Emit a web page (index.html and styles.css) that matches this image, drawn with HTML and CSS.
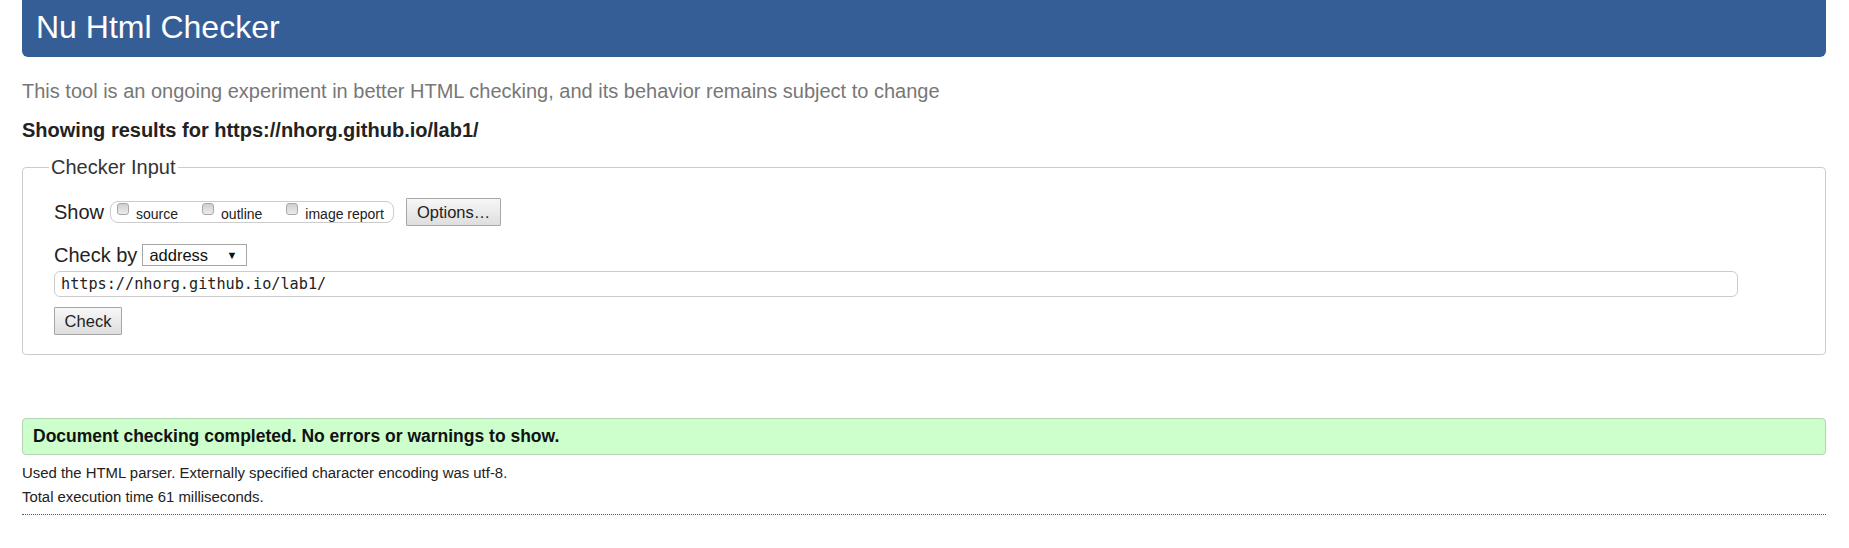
FILE: index.html
```html
<!DOCTYPE html>
<html lang="en">
<head>
<meta charset="utf-8">
<title>Nu Html Checker</title>
<link rel="stylesheet" href="styles.css">
</head>
<body>
<h1 class="title">Nu Html Checker</h1>
<p class="about">This tool is an ongoing experiment in better HTML checking, and its behavior remains subject to change</p>
<p class="results-for">Showing results for https://nhorg.github.io/lab1/</p>
<fieldset class="checker">
  <legend class="legend">Checker Input</legend>
  <div class="row show-row">
    <span class="label">Show</span>
    <span class="opts">
      <span class="opt"><input type="checkbox" class="cb"><span class="opt-text">source</span></span>
      <span class="opt"><input type="checkbox" class="cb"><span class="opt-text">outline</span></span>
      <span class="opt"><input type="checkbox" class="cb"><span class="opt-text">image report</span></span>
    </span>
    <button class="btn options">Options…</button>
  </div>
  <div class="row checkby-row">
    <span class="label">Check by</span>
    <span class="select"><span class="select-text">address</span><span class="arrow">▼</span></span>
  </div>
  <div class="url">https://nhorg.github.io/lab1/</div>
  <div class="row">
    <button class="btn check">Check</button>
  </div>
</fieldset>
<div class="success">Document checking completed. No errors or warnings to show.</div>
<p class="info">Used the HTML parser. Externally specified character encoding was utf-8.</p>
<p class="info time">Total execution time 61 milliseconds.</p>
</body>
</html>
```
FILE: styles.css
```css
html, body {
  background: #fff;
}
body {
  margin: 0;
  padding: 0 23px 0 22px;
  font-family: "Liberation Sans", Arial, sans-serif;
  color: #222;
}
.title {
  margin: 0;
  height: 57px;
  line-height: 55px;
  padding-left: 14px;
  background: #365e96;
  color: #fff;
  font-size: 32px;
  font-weight: normal;
  border-radius: 0 0 6px 6px;
}
.about {
  margin: 23px 0 0;
  font-size: 20px;
  line-height: 22px;
  color: #777;
}
.results-for {
  margin: 17px 0 0;
  font-size: 20px;
  line-height: 22px;
  font-weight: bold;
  color: #222;
}
.checker {
  margin: 15px 0 0;
  border: 1px solid #ccc;
  border-radius: 4px;
  padding: 20px 31px 19px;
  min-width: 0;
}
.legend {
  margin-left: -5px;
  padding: 0 2px;
  font-size: 20px;
  line-height: 22px;
  color: #333;
}
.row {
  display: flex;
  align-items: center;
}
.label {
  font-size: 20px;
  line-height: 24px;
  color: #222;
}
.show-row {
  height: 28px;
}
.opts {
  display: inline-flex;
  align-items: center;
  height: 20px;
  margin-left: 6px;
  padding: 0 9px 0 6px;
  border: 1px solid #ccc;
  border-radius: 8px;
}
.opt {
  display: inline-flex;
  align-items: center;
  margin-right: 24px;
}
.opt:last-child {
  margin-right: 0;
}
.cb {
  appearance: none;
  -webkit-appearance: none;
  width: 12px;
  height: 12px;
  margin: 0 7px 6px 0;
  border: 1px solid #a8a8a8;
  border-radius: 3px;
  background: linear-gradient(#cfcfcf, #ececec);
}
.opt-text {
  font-size: 14px;
  line-height: 16px;
  padding-top: 4px;
  color: #222;
}
.btn {
  font-family: "Liberation Sans", Arial, sans-serif;
  font-size: 16.5px;
  color: #222;
  background: linear-gradient(#f7f7f7, #dedede);
  border: 1px solid #a6a6a6;
  border-radius: 1px;
  height: 28px;
  padding: 0 10px;
  margin: 0;
}
.options {
  margin-left: 12px;
}
.checkby-row {
  margin-top: 17px;
  height: 24px;
}
.select {
  display: inline-flex;
  align-items: center;
  justify-content: space-between;
  width: 88px;
  height: 20px;
  margin-left: 5px;
  padding: 0 9px 0 6px;
  border: 1px solid #a6a6a6;
  font-size: 16.5px;
  color: #111;
  background: #fff;
}
.arrow {
  font-size: 11px;
  color: #111;
}
.url {
  margin-top: 4px;
  height: 24px;
  width: 1676px;
  padding-left: 6px;
  border: 1px solid #ccc;
  border-radius: 6px;
  font-family: "DejaVu Sans Mono", "Liberation Mono", monospace;
  font-size: 15.2px;
  line-height: 24px;
  color: #222;
}
.check {
  margin-top: 10px;
  height: 28px;
  width: 68px;
  padding: 0;
}
.success {
  margin-top: 63px;
  height: 35px;
  line-height: 35px;
  padding-left: 10px;
  background: #ccffcc;
  border: 1px solid #b4d4b4;
  border-radius: 4px;
  font-size: 17.5px;
  font-weight: bold;
  color: #111;
}
.info {
  margin: 9px 0 0;
  font-size: 14.9px;
  line-height: 18px;
  color: #222;
}
.time {
  margin-top: 6px;
  padding-bottom: 8px;
  border-bottom: 1px dotted #555;
}
```
